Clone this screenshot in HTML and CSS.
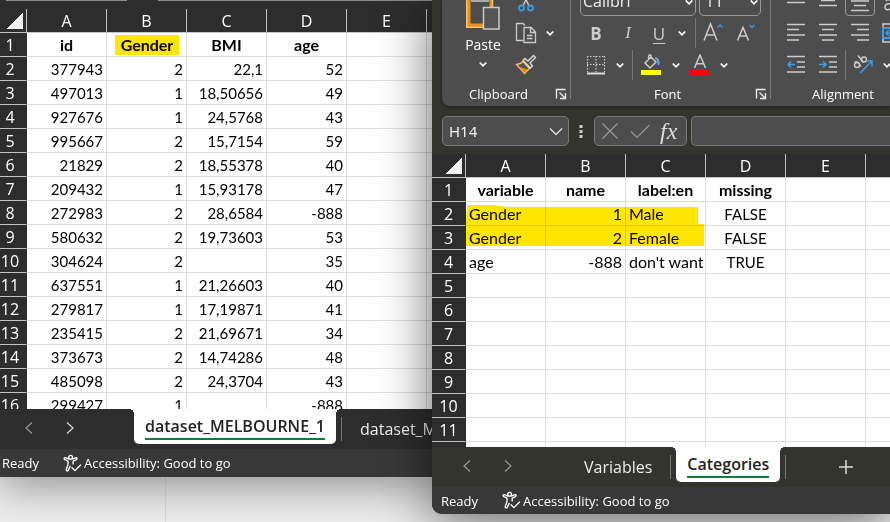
FILE: index.html
```html
<!DOCTYPE html>
<html lang="en">
<head>
<meta charset="utf-8">
<title>Workbooks</title>
<link rel="stylesheet" href="styles.css">
</head>
<body>
<svg class="defs" aria-hidden="true">
  <symbol id="chev" viewBox="0 0 12 12"><path d="M2.700 4.500 6 7.800 9.300 4.500" fill="none" stroke="#fff" stroke-width="1.700"/></symbol>
  <symbol id="prev" viewBox="0 0 16 16"><path d="M11 2.500 5 8l6 5.500" fill="none" stroke="currentColor" stroke-width="1.200"/></symbol>
  <symbol id="next" viewBox="0 0 16 16"><path d="M5 2.500 11 8l-6 5.500" fill="none" stroke="currentColor" stroke-width="1.200"/></symbol>
  <symbol id="launch" viewBox="0 0 12 12"><path d="M1.500 10.500V1.500H10.500M4.500 4.500l5 5M10.500 5v5.500H5" fill="none" stroke="#eee" stroke-width="1.300"/></symbol>
  <symbol id="access" viewBox="0 0 20 20"><g fill="none" stroke="#fff" stroke-width="1.400" stroke-linecap="round" stroke-linejoin="round"><circle cx="8" cy="3.500" r="2"/><path d="M5.800 5.200 3 4C1 3.400.600 5.300 2 6l3.300 1.500v3.500L3.500 16c-.500 2 1.500 2.500 2.200.900L7.500 13M10.200 5.200 13 4c2-.600 2.400 1.300 1 2l-3.300 1.500v3"/><path d="M9.500 14.500 12.500 17.500 18.500 11.500"/></g></symbol>
</svg>

<main class="desktop">
  <section class="window window-data" aria-label="Dataset workbook">
    <div class="ribbon-edge"><span></span><span></span></div>
    <div class="sheet">
      <table class="grid grid-data">
        <colgroup><col class="num"><col><col><col><col><col><col></colgroup>
        <thead><tr><th class="corner"></th><th>A</th><th>B</th><th>C</th><th>D</th><th>E</th><th></th></tr></thead>
        <tbody>
          <tr class="names"><th>1</th><td>id</td><td><span class="mark">Gender</span></td><td>BMI</td><td>age</td><td></td><td></td></tr>
          <tr><th>2</th><td>377943</td><td>2</td><td>22,1</td><td>52</td><td></td><td></td></tr>
          <tr><th>3</th><td>497013</td><td>1</td><td>18,50656</td><td>49</td><td></td><td></td></tr>
          <tr><th>4</th><td>927676</td><td>1</td><td>24,5768</td><td>43</td><td></td><td></td></tr>
          <tr><th>5</th><td>995667</td><td>2</td><td>15,7154</td><td>59</td><td></td><td></td></tr>
          <tr><th>6</th><td>21829</td><td>2</td><td>18,55378</td><td>40</td><td></td><td></td></tr>
          <tr><th>7</th><td>209432</td><td>1</td><td>15,93178</td><td>47</td><td></td><td></td></tr>
          <tr><th>8</th><td>272983</td><td>2</td><td>28,6584</td><td>-888</td><td></td><td></td></tr>
          <tr><th>9</th><td>580632</td><td>2</td><td>19,73603</td><td>53</td><td></td><td></td></tr>
          <tr><th>10</th><td>304624</td><td>2</td><td></td><td>35</td><td></td><td></td></tr>
          <tr><th>11</th><td>637551</td><td>1</td><td>21,26603</td><td>40</td><td></td><td></td></tr>
          <tr><th>12</th><td>279817</td><td>1</td><td>17,19871</td><td>41</td><td></td><td></td></tr>
          <tr><th>13</th><td>235415</td><td>2</td><td>21,69671</td><td>34</td><td></td><td></td></tr>
          <tr><th>14</th><td>373673</td><td>2</td><td>14,74286</td><td>48</td><td></td><td></td></tr>
          <tr><th>15</th><td>485098</td><td>2</td><td>24,3704</td><td>43</td><td></td><td></td></tr>
          <tr><th>16</th><td>299427</td><td>1</td><td></td><td>-888</td><td></td><td></td></tr>
        </tbody>
      </table>
    </div>
    <nav class="tabs" aria-label="Sheets">
      <div class="tab-nav">
        <button type="button" class="dim" aria-label="Previous sheet"><svg><use href="#prev"/></svg></button>
        <button type="button" aria-label="Next sheet"><svg><use href="#next"/></svg></button>
      </div>
      <button type="button" class="tab active"><span>dataset_MELBOURNE_1</span></button>
      <i class="tab-sep"></i>
      <button type="button" class="tab">dataset_M</button>
    </nav>
    <footer class="status"><span>Ready</span><span class="access"><svg><use href="#access"/></svg>Accessibility: Good to go</span></footer>
  </section>

  <section class="window window-dict" aria-label="Dictionary workbook">
    <div class="ribbon">
      <div class="group">
        <div class="clip-tools">
          <button type="button" class="paste">
            <svg class="paste-icon" viewBox="0 0 34 30"><path d="M1.500-4V26.500H17" fill="none" stroke="#f5c36b" stroke-width="3"/><path d="M3-4V25H17M25-4V7" fill="none" stroke="#e8921f" stroke-width="3"/><path d="M26.500-4V7" stroke="#f5c36b" stroke-width="1.500"/><path d="M5 1H23" stroke="#aaa" stroke-width="2"/><path d="M17.500 7.500H33V29H17.500Z" fill="#555" stroke="#ccc" stroke-width="1.500"/></svg>
            <span>Paste</span>
            <svg class="chev"><use href="#chev"/></svg>
          </button>
          <div class="stack">
            <div class="row first"><button type="button" class="tool" aria-label="Cut"><svg viewBox="0 0 22 22"><path d="M8 16 13.500 4M14 16 8.500 4" stroke="#ccc" stroke-width="1.400"/><g fill="none" stroke="#3d9be0" stroke-width="1.800"><circle cx="6.500" cy="18" r="2.500"/><circle cx="15.500" cy="18" r="2.500"/></g></svg></button></div>
            <div class="row"><button type="button" class="tool" aria-label="Copy"><svg viewBox="0 0 22 22"><g fill="none" stroke="#ccc" stroke-width="1.300"><path d="M8.500 18.500H1.500V1.500H8L10 3.500"/><path d="M9 5.500H16L20.500 10V20.500H9ZM15.500 5.500V10.500H20.500M12 13.500H17.500M12 16.500H17.500"/></g></svg></button><button type="button" class="drop" aria-label="Copy options"><svg class="chev"><use href="#chev"/></svg></button></div>
            <div class="row"><button type="button" class="tool" aria-label="Format painter"><svg viewBox="0 0 22 22"><path d="M8 7.500 Q6 10 1.500 10.500L9.500 19.500 14.500 14.500Z" fill="#555" stroke="#f5c36b" stroke-width="1.300"/><path d="M3.500 12.500 12.500 15.500 9.500 19Z" fill="#f08a12"/><path d="M8 6.500 10 4.500 13 7 18.500 1.500 20.500 3.500 15 9 17.500 12 15.500 14Z" fill="#4d4d4d" stroke="#ddd" stroke-width="1.300"/></svg></button></div>
          </div>
        </div>
        <div class="caption"><span>Clipboard</span><button type="button" aria-label="Clipboard settings"><svg><use href="#launch"/></svg></button></div>
      </div>

      <div class="group">
        <div class="row first boxes">
          <span class="combo family"><select aria-label="Font"><option>Calibri</option></select><svg class="chev"><use href="#chev"/></svg></span>
          <span class="combo size"><select aria-label="Font size"><option>11</option></select><svg class="chev"><use href="#chev"/></svg></span>
        </div>
        <div class="row">
          <button type="button" class="tool letter bold">B</button><button type="button" class="tool letter italic">I</button><button type="button" class="tool letter under">U</button><button type="button" class="drop" aria-label="Underline options"><svg class="chev"><use href="#chev"/></svg></button>
          <i class="sep wide"></i>
          <button type="button" class="tool" aria-label="Grow font"><svg viewBox="0 0 22 22"><path d="M1 18.500 7.500 2 14 18.500M3.300 13H11.700" fill="none" stroke="#ccc" stroke-width="1.500"/><path d="M14.500 5.500 17 3 19.500 5.500" fill="none" stroke="#3d9be0" stroke-width="1.500"/></svg></button><button type="button" class="tool" aria-label="Shrink font"><svg viewBox="0 0 22 22"><path d="M2.500 18.500 8 5.500 13.500 18.500M4.500 14H11.500" fill="none" stroke="#ccc" stroke-width="1.500"/><path d="M14.500 3 17 5.500 19.500 3" fill="none" stroke="#3d9be0" stroke-width="1.500"/></svg></button>
        </div>
        <div class="row">
          <button type="button" class="tool" aria-label="Borders"><svg viewBox="0 0 22 22"><path d="M2 2.500H20M2 10.500H20M2.500 2V18M11 2V18M19.500 2V18" fill="none" stroke="#ccc" stroke-width="1.200" stroke-dasharray="1.500 1.500"/><path d="M2 19.500H20" stroke="#ddd" stroke-width="2"/></svg></button><button type="button" class="drop" aria-label="Border options"><svg class="chev"><use href="#chev"/></svg></button>
          <i class="sep"></i>
          <button type="button" class="tool" aria-label="Fill colour"><svg viewBox="0 0 22 22"><path d="M10 3 15 8 9 14 4 9 10 3V1.500Q8-.500 7.500 3V6" fill="none" stroke="#ccc" stroke-width="1.500"/><path d="M14 4Q18 4.500 17.500 11" fill="none" stroke="#5aa9e6" stroke-width="2"/><path d="M0 16H20V21H0Z" fill="#ff0"/></svg></button><button type="button" class="drop" aria-label="Fill options"><svg class="chev"><use href="#chev"/></svg></button>
          <button type="button" class="tool" aria-label="Font colour"><svg viewBox="0 0 22 22"><path d="M5.500 14 11 1 16.500 14M7.500 9.800H14.500" fill="none" stroke="#ccc" stroke-width="1.500"/><path d="M1 16H21V21H1Z" fill="#f00"/></svg></button><button type="button" class="drop" aria-label="Font colour options"><svg class="chev"><use href="#chev"/></svg></button>
        </div>
        <div class="caption"><span>Font</span><button type="button" aria-label="Font settings"><svg><use href="#launch"/></svg></button></div>
      </div>

      <div class="group">
        <div class="row first">
          <button type="button" class="tool" aria-label="Top align"><svg viewBox="0 0 22 22"><path d="M2 12.500H20" stroke="#ccc" stroke-width="1.500"/></svg></button><button type="button" class="tool" aria-label="Middle align"><svg viewBox="0 0 22 22"><path d="M4 10.500H18M2 15.500H20" stroke="#ccc" stroke-width="1.500"/></svg></button><button type="button" class="tool pressed" aria-label="Bottom align"><svg viewBox="0 0 22 22"><path d="M2 11H20M5 15.500H17M2 20.500H20" stroke="#ccc" stroke-width="1.500"/></svg></button><button type="button" class="tool" aria-label="Wrap text"><svg viewBox="0 0 22 22"><path d="M10 14Q4 13 4 17T10 19V11Q7 8 5 11" fill="none" stroke="#ccc" stroke-width="1.500"/></svg></button>
        </div>
        <div class="row">
          <button type="button" class="tool" aria-label="Align left"><svg viewBox="0 0 22 22"><path d="M2 2.500H20M2 7.500H14M2 13H20M2 18H14" stroke="#ccc" stroke-width="1.500"/></svg></button><button type="button" class="tool" aria-label="Centre"><svg viewBox="0 0 22 22"><path d="M2 2.500H20M5 7.500H17M2 13H20M5 18H17" stroke="#ccc" stroke-width="1.500"/></svg></button><button type="button" class="tool" aria-label="Align right"><svg viewBox="0 0 22 22"><path d="M2 2.500H20M8 7.500H20M2 13H20M8 18H20" stroke="#ccc" stroke-width="1.500"/></svg></button><button type="button" class="tool" aria-label="Merge"><svg viewBox="0 0 22 22"><path d="M2 2H20V20H2Z" fill="none" stroke="#ccc" stroke-width="1.500"/><path d="M2 6H21V16H2Z" fill="#4d4d4d" stroke="#3d9be0" stroke-width="2"/><path d="M12 11H5M8 8 5 11 8 14" fill="none" stroke="#3d9be0" stroke-width="1.500"/></svg></button>
        </div>
        <div class="row">
          <button type="button" class="tool" aria-label="Decrease indent"><svg viewBox="0 0 22 22"><path d="M2 2.500H20M12 8H20M12 13H20M2 18H20" stroke="#ccc" stroke-width="1.500"/><path d="M10 10.500H3M6 7.500 3 10.500 6 13.500" fill="none" stroke="#3d9be0" stroke-width="1.600"/></svg></button><button type="button" class="tool" aria-label="Increase indent"><svg viewBox="0 0 22 22"><path d="M2 2.500H20M12 8H20M12 13H20M2 18H20" stroke="#ccc" stroke-width="1.500"/><path d="M2 10.500H9M6 7.500 9 10.500 6 13.500" fill="none" stroke="#3d9be0" stroke-width="1.600"/></svg></button>
          <i class="sep thin"></i>
          <button type="button" class="tool" aria-label="Orientation"><svg viewBox="0 0 22 22"><g fill="none" stroke="#ccc" stroke-width="1.400"><circle cx="5" cy="11" r="2.500"/><path d="M2.500 8.500Q5.500 6 9 12.500"/><circle cx="12" cy="5.500" r="2.500"/><path d="M6 1.500 11.500 8.500"/></g><path d="M8 19 20 7M14.500 7H20V12.500" fill="none" stroke="#3d9be0" stroke-width="1.600"/></svg></button><button type="button" class="drop" aria-label="Orientation options"><svg class="chev"><use href="#chev"/></svg></button>
        </div>
        <div class="caption"><span>Alignment</span></div>
      </div>
    </div>

    <div class="formula">
      <button type="button" class="box name-box">H14<svg viewBox="0 0 14 14"><path d="M1 4.500 7 10.500 13 4.500" fill="none" stroke="#ddd" stroke-width="1.300"/></svg></button>
      <svg class="dots" viewBox="0 0 4 14"><path d="M.500 1H3.500V4H.500ZM.500 6H3.500V9H.500ZM.500 11H3.500V14H.500Z" fill="#ccc"/></svg>
      <div class="box actions">
        <button type="button" aria-label="Cancel"><svg viewBox="0 0 20 18"><path d="M2.500 1.500 17.500 16.500M17.500 1.500 2.500 16.500" stroke="#999" stroke-width="1.200"/></svg></button>
        <button type="button" aria-label="Enter"><svg viewBox="0 0 20 18"><path d="M1 9.500 7 15.500 19.500 3" fill="none" stroke="#999" stroke-width="1.200"/></svg></button>
        <button type="button" class="fx">fx</button>
      </div>
      <input class="box entry" type="text" aria-label="Formula">
    </div>

    <div class="sheet">
      <table class="grid grid-dict">
        <colgroup><col class="num"><col><col><col><col><col><col></colgroup>
        <thead><tr><th class="corner"></th><th>A</th><th>B</th><th>C</th><th>D</th><th>E</th><th></th></tr></thead>
        <tbody>
          <tr class="names"><th>1</th><td>variable</td><td>name</td><td>label:en</td><td>missing</td><td></td><td></td></tr>
          <tr><th>2</th><td>Gender</td><td>1</td><td>Male</td><td>FALSE</td><td></td><td></td></tr>
          <tr><th>3</th><td>Gender</td><td>2</td><td>Female</td><td>FALSE</td><td></td><td></td></tr>
          <tr><th>4</th><td>age</td><td>-888</td><td>don't want</td><td>TRUE</td><td></td><td></td></tr>
          <tr><th>5</th><td></td><td></td><td></td><td></td><td></td><td></td></tr>
          <tr><th>6</th><td></td><td></td><td></td><td></td><td></td><td></td></tr>
          <tr><th>7</th><td></td><td></td><td></td><td></td><td></td><td></td></tr>
          <tr><th>8</th><td></td><td></td><td></td><td></td><td></td><td></td></tr>
          <tr><th>9</th><td></td><td></td><td></td><td></td><td></td><td></td></tr>
          <tr><th>10</th><td></td><td></td><td></td><td></td><td></td><td></td></tr>
          <tr><th>11</th><td></td><td></td><td></td><td></td><td></td><td></td></tr>
          <tr><th></th><td></td><td></td><td></td><td></td><td></td><td></td></tr>
        </tbody>
      </table>
      <svg class="marker" viewBox="0 0 238 44" aria-hidden="true"><path d="M1 2 28 2 40 4H232V21H238V43H0V20Z" fill="#ffe600"/></svg>
    </div>
    <nav class="tabs" aria-label="Sheets">
      <div class="tab-nav">
        <button type="button" class="dim" aria-label="Previous sheet"><svg><use href="#prev"/></svg></button>
        <button type="button" class="dim" aria-label="Next sheet"><svg><use href="#next"/></svg></button>
      </div>
      <button type="button" class="tab">Variables</button>
      <i class="tab-sep"></i>
      <button type="button" class="tab active"><span>Categories</span></button>
      <i class="tab-sep"></i>
      <button type="button" class="add" aria-label="New sheet"><svg viewBox="0 0 16 16"><path d="M8 1V15M1 8H15" stroke="#ddd" stroke-width="1.500"/></svg></button>
    </nav>
    <footer class="status"><span>Ready</span><span class="access"><svg><use href="#access"/></svg>Accessibility: Good to go</span></footer>
  </section>
</main>
</body>
</html>
```
FILE: styles.css
```css
* { box-sizing: border-box; }

body {
  margin: 0;
  font-family: "Open Sans", "Noto Sans", sans-serif;
  color: #fff;
}

button {
  padding: 0;
  border: 0;
  background: none;
  color: inherit;
  font: inherit;
}

svg { display: block; flex: none; }
.defs { position: absolute; width: 0; height: 0; }

.desktop {
  position: relative;
  height: 100vh;
  overflow: hidden;
  background: linear-gradient(90deg, transparent 165px, #dcdcdc 165px 166px, transparent 166px), #ececec;
}

/* windows */
.window {
  position: absolute;
  top: 0;
  display: flex;
  flex-direction: column;
  overflow: hidden;
}
.window-data {
  left: 0;
  bottom: 45px;
  width: 432px;
  background: #2d2d2d;
  box-shadow: 0 8px 40px rgba(0, 0, 0, .4);
}
.window-dict {
  left: 432px;
  right: 0;
  bottom: 8px;
  background: #33342e;
  border-bottom-left-radius: 10px;
  box-shadow: 0 6px 52px rgba(0, 0, 0, .6);
}

.ribbon-edge { display: flex; gap: 31px; height: 9px; padding-left: 6px; }
.ribbon-edge span { width: 121px; height: 1px; background: #8a8a8a; }
.ribbon-edge span:last-child { flex: 1; }

/* grids */
.sheet { position: relative; flex: 1; min-height: 0; overflow: hidden; background: #fff; }
.grid {
  width: 0;
  table-layout: fixed;
  border-collapse: separate;
  border-spacing: 0;
  font: 15px/22px Lato, sans-serif;
  color: #000;
}
.grid col { width: 80px; }
.grid-data .num { width: 27px; }
.grid-dict .num { width: 34px; }
.grid th, .grid td {
  height: 24px;
  padding: 1px 3px 0;
  border-right: 1px solid #dcdcdc;
  border-bottom: 1px solid #dcdcdc;
  overflow: hidden;
  white-space: nowrap;
}
.grid th {
  padding: 0;
  background: #2d2d2d;
  border-color: #c4c4c4;
  color: #fff;
  font: 16px/22px "Open Sans", sans-serif;
  text-align: center;
}
.grid tbody th { border-right-color: #2d2d2d; }
.grid-data tbody th { padding-right: 6px; }
.grid .corner { background: linear-gradient(135deg, transparent 50%, #f0f0f0 50%) right 3px bottom 3px / 16px 16px no-repeat #2d2d2d; }
.grid-data td { text-align: right; }
.grid-dict td { font-size: 16px; }
.grid-dict td:nth-child(3) { text-align: right; }
.grid-dict td:nth-child(5) { text-align: center; font-size: 15px; }
.grid .names td { text-align: center; font-size: 16px; font-weight: 700; }
.mark {
  display: block;
  margin: 0 4px 0 5px;
  background: #ffe600;
  line-height: 20px;
}
.marker {
  position: absolute;
  top: 49px;
  left: 34px;
  width: 238px;
  height: 44px;
  mix-blend-mode: multiply;
}

/* sheet tabs */
.tabs {
  display: flex;
  flex: none;
  height: 40px;
  font-size: 16px;
  white-space: nowrap;
}
.tab-nav { display: flex; flex: none; gap: 25px; width: 134px; padding: 0 0 2px 21px; align-items: center; }
.tab-nav svg { width: 16px; height: 16px; color: #ddd; }
.tab-nav .dim svg { color: #999; }
.window-dict .tab-nav { padding-left: 27px; }
.tab { flex: none; padding: 0 13px 0 18px; color: #eee; }
.tab.active {
  position: relative;
  height: 35px;
  padding: 0 11px;
  background: #fff;
  border-radius: 0 0 5px 5px;
  color: #222;
  font-weight: 600;
}
.tab.active::before, .tab.active::after {
  content: "";
  position: absolute;
  top: 0;
  width: 5px;
  height: 5px;
}
.tab.active::before { right: 100%; background: radial-gradient(circle at 0 100%, transparent 5px, #fff 5px); }
.tab.active::after { left: 100%; background: radial-gradient(circle at 100% 100%, transparent 5px, #fff 5px); }
.tab.active span { display: block; border-bottom: 2px solid #107c41; line-height: 24px; }
.tab-sep { flex: none; width: 1px; height: 24px; margin: 8px 0 0 5px; background: #777; }
.window-dict .tab-sep { margin-right: 5px; }
.window-dict .tab-sep:has(+ .add) { margin-right: 52px; }
.add svg { width: 16px; height: 16px; }

.status {
  display: flex;
  flex: none;
  align-items: center;
  gap: 24px;
  height: 28px;
  padding-left: 2px;
  background: #383838;
  font-size: 13px;
}
.window-dict .status { padding-left: 9px; height: 27px; }
.access { display: flex; align-items: center; gap: 2px; }
.access svg { width: 19px; height: 19px; }

/* ribbon */
.ribbon {
  display: flex;
  flex: none;
  height: 106px;
  margin-left: 10px;
  overflow: hidden;
  background: #4d4d4d;
  border-bottom-left-radius: 8px;
  box-shadow: 0 1px 3px #1c1c1c;
}
.group { position: relative; flex: none; width: 200px; padding-left: 9px; }
.group:first-child { width: 129px; padding-left: 16px; }
.group:not(:last-child)::after {
  content: "";
  position: absolute;
  top: 0;
  right: 0;
  width: 1px;
  height: 99px;
  background: #777;
}
.row { display: flex; align-items: center; height: 32px; }
.row.first { height: 17px; align-items: flex-end; overflow: hidden; }
.tool { display: flex; justify-content: center; align-items: center; flex: none; width: 32px; height: 32px; }
.tool svg { width: 22px; height: 22px; }
.drop { width: 16px; height: 32px; display: flex; justify-content: center; align-items: center; }
.chev { width: 12px; height: 12px; }
.sep { width: 1px; height: 30px; margin: 0 3px 0 4px; background: #777; }
.sep.wide { margin: 0 2px 0 5px; }
.sep.thin { margin: 0 1px; }
.letter { color: #ccc; font-size: 17px; }
.bold { font-weight: 700; }
.italic { font-family: "Liberation Serif", serif; font-style: italic; }
.under { width: 30px; text-decoration: underline; text-underline-offset: 3px; }
.row.first .pressed { width: 30px; height: 30px; margin: 0 1px 1px; border: 1px solid #999; border-radius: 4px; }
.boxes { gap: 3px; padding-bottom: 1px; }
.combo { position: relative; flex: none; display: block; width: 116px; height: 30px; }
.combo.size { width: 62px; }
.combo select {
  appearance: none;
  width: 100%;
  height: 100%;
  padding: 0 2px;
  border: 1px solid #999;
  border-radius: 5px;
  background: #4d4d4d;
  color: #eee;
  font: 16px "Open Sans", sans-serif;
}
.combo.size select { padding-left: 5px; }
.combo .chev { position: absolute; top: 10px; right: 1px; }

.clip-tools { display: flex; gap: 2px; height: 81px; }
.paste { display: flex; flex-direction: column; align-items: center; width: 50px; font-size: 14px; line-height: 26px; }
.paste-icon { width: 34px; height: 30px; }
.paste > span { margin: 2px 0 0; }
.caption {
  display: flex;
  justify-content: center;
  align-items: center;
  height: 25px;
  font-size: 13px;
}
.caption span { flex: 1; text-align: center; }
.caption button { margin-right: 4px; }
.caption svg { width: 12px; height: 12px; }
.group:first-child .caption { margin-left: -16px; }
.group:last-child { width: 158px; }
.group:last-child .caption { width: 126px; }

/* formula bar */
.formula { display: flex; flex: none; align-items: center; height: 48px; padding: 2px 0 0 10px; }
.box { height: 30px; border: 1px solid #777; border-radius: 5px; background: #4d4d4d; }
.name-box {
  display: flex;
  align-items: center;
  justify-content: space-between;
  width: 127px;
  padding: 0 5px 0 6px;
  font-size: 15px;
}
.name-box svg { width: 14px; height: 14px; }
.dots { width: 4px; height: 14px; margin: 0 11px 0 10px; }
.actions { display: flex; align-items: center; gap: 10px; width: 93px; padding: 0 5px; }
.actions svg { width: 20px; height: 18px; }
.fx { color: #ddd; font: italic 24px/24px "Liberation Serif", serif; }
.entry { flex: 1; min-width: 0; margin-left: 4px; border-right: 0; border-radius: 5px 0 0 5px; color: #fff; }
```
